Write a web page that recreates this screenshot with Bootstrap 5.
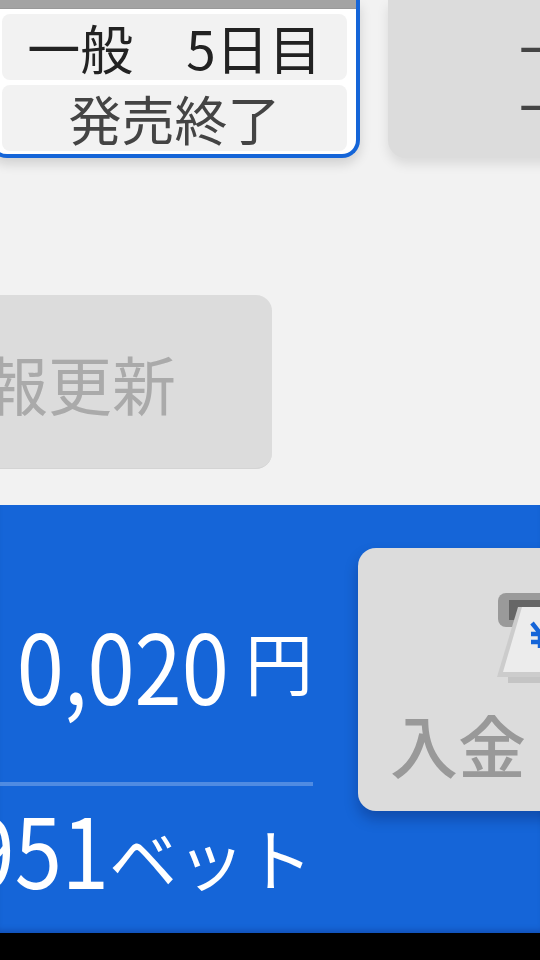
<!DOCTYPE html>
<html lang="ja"><head><meta charset="utf-8">
<link href="https://cdn.jsdelivr.net/npm/bootstrap@5.3.0/dist/css/bootstrap.min.css" rel="stylesheet">
<style>
html,body{height:960px;overflow:hidden;background:#000}
body{width:540px;font-family:"Noto Sans CJK JP",Roboto,sans-serif}
.screen{height:933px;background:#f2f2f2;overflow:hidden}
.race-row{gap:28px;height:158px;margin-left:-11px;margin-right:-200px}
.race-on{width:371px;flex:none;background:#fff;border:4px solid #1565d8;border-top:0;border-radius:0 0 18px 18px;box-shadow:0 6px 12px rgba(0,0,0,.14);padding:3px 9px 3px;gap:5px}
.race-head{height:10px;margin:-3px -9px 0;background:#a3a3a3;border-bottom:1px solid #999}
.race-cell{background:#f2f2f2;border-radius:8px;height:66px;font-size:53px;line-height:66px;text-align:center;white-space:nowrap;color:#222}
.race-cell.done{color:#444}
.race-off{width:384px;flex:none;background:#dcdcdc;border-radius:0 0 18px 18px;box-shadow:0 6px 12px rgba(0,0,0,.1);padding:19px 0 0 131px;font-size:53px;line-height:58px;color:#444;white-space:nowrap}
.refresh{width:448px;height:174px;margin:137px 0 36px -176px;background:#dcdcdc;border-radius:16px;font-size:64px;line-height:1;color:#aaa;border-bottom:1px solid #d4d4d4}
.footer-bar{height:428px;background:#1565d8;padding-top:43px;box-shadow:inset 0 -6px 6px -4px rgba(0,0,60,.25)}
.money{width:313px;flex:none;color:#fff}
.amount{height:238px;border-bottom:4px solid rgba(255,255,255,.25);white-space:nowrap;padding-top:64px}
.tall-num{font-size:85px;line-height:1.2;display:inline-block;transform:scaleY(1.14)}
.unit{font-size:68px;line-height:1.2}
.bets{white-space:nowrap;padding-top:10px}
.deposit{width:260px;height:263px;flex:none;margin-left:45px;background:#dcdcdc;border-radius:18px;box-shadow:0 8px 14px rgba(0,0,40,.25);color:#999;font-size:68px;font-weight:500;padding:0 0 26px 32px;line-height:1.2}
.deposit svg{position:absolute;left:138px;top:44px}
</style></head>
<body>
<div class="screen">
  <div class="d-flex race-row">
    <div class="race-on d-flex flex-column">
      <div class="race-head"></div>
      <div class="race-cell">一般　5日目</div>
      <div class="race-cell done">発売終了</div>
    </div>
    <div class="race-off">一般<br>一般</div>
  </div>
  <div class="refresh d-flex align-items-center justify-content-center">情報更新</div>
  <div class="footer-bar d-flex">
    <div class="money">
      <div class="amount d-flex justify-content-end align-items-start"><span class="tall-num">0,020</span><span class="unit ms-3 mt-2">円</span></div>
      <div class="bets d-flex justify-content-end align-items-end"><span class="tall-num">951</span><span class="unit">ベット</span></div>
    </div>
    <div class="deposit position-relative d-flex align-items-end">入金
      <svg width="100" height="100" viewBox="0 0 100 100" aria-hidden="true">
        <rect x="2" y="1" width="100" height="34" rx="8" fill="#9a9a9a"/>
        <rect x="13" y="8" width="90" height="20" fill="#666"/>
        <path d="M1 85 L22 15 H100 V85Z" fill="#ccc"/>
        <path d="M12 91V85H100V91Z" fill="#c4c4c4"/>
        <path d="M7 80 L26 15 H100 V80Z" fill="#ececec"/>
        <path d="M36 31l8 10 8-10M44 41v15M35 42h18M35 50h18" stroke="#1565d8" stroke-width="4.5" fill="none"/>
      </svg>
    </div>
  </div>
</div>
<script src="https://cdn.jsdelivr.net/npm/bootstrap@5.3.0/dist/js/bootstrap.bundle.min.js"></script>
</body></html>
